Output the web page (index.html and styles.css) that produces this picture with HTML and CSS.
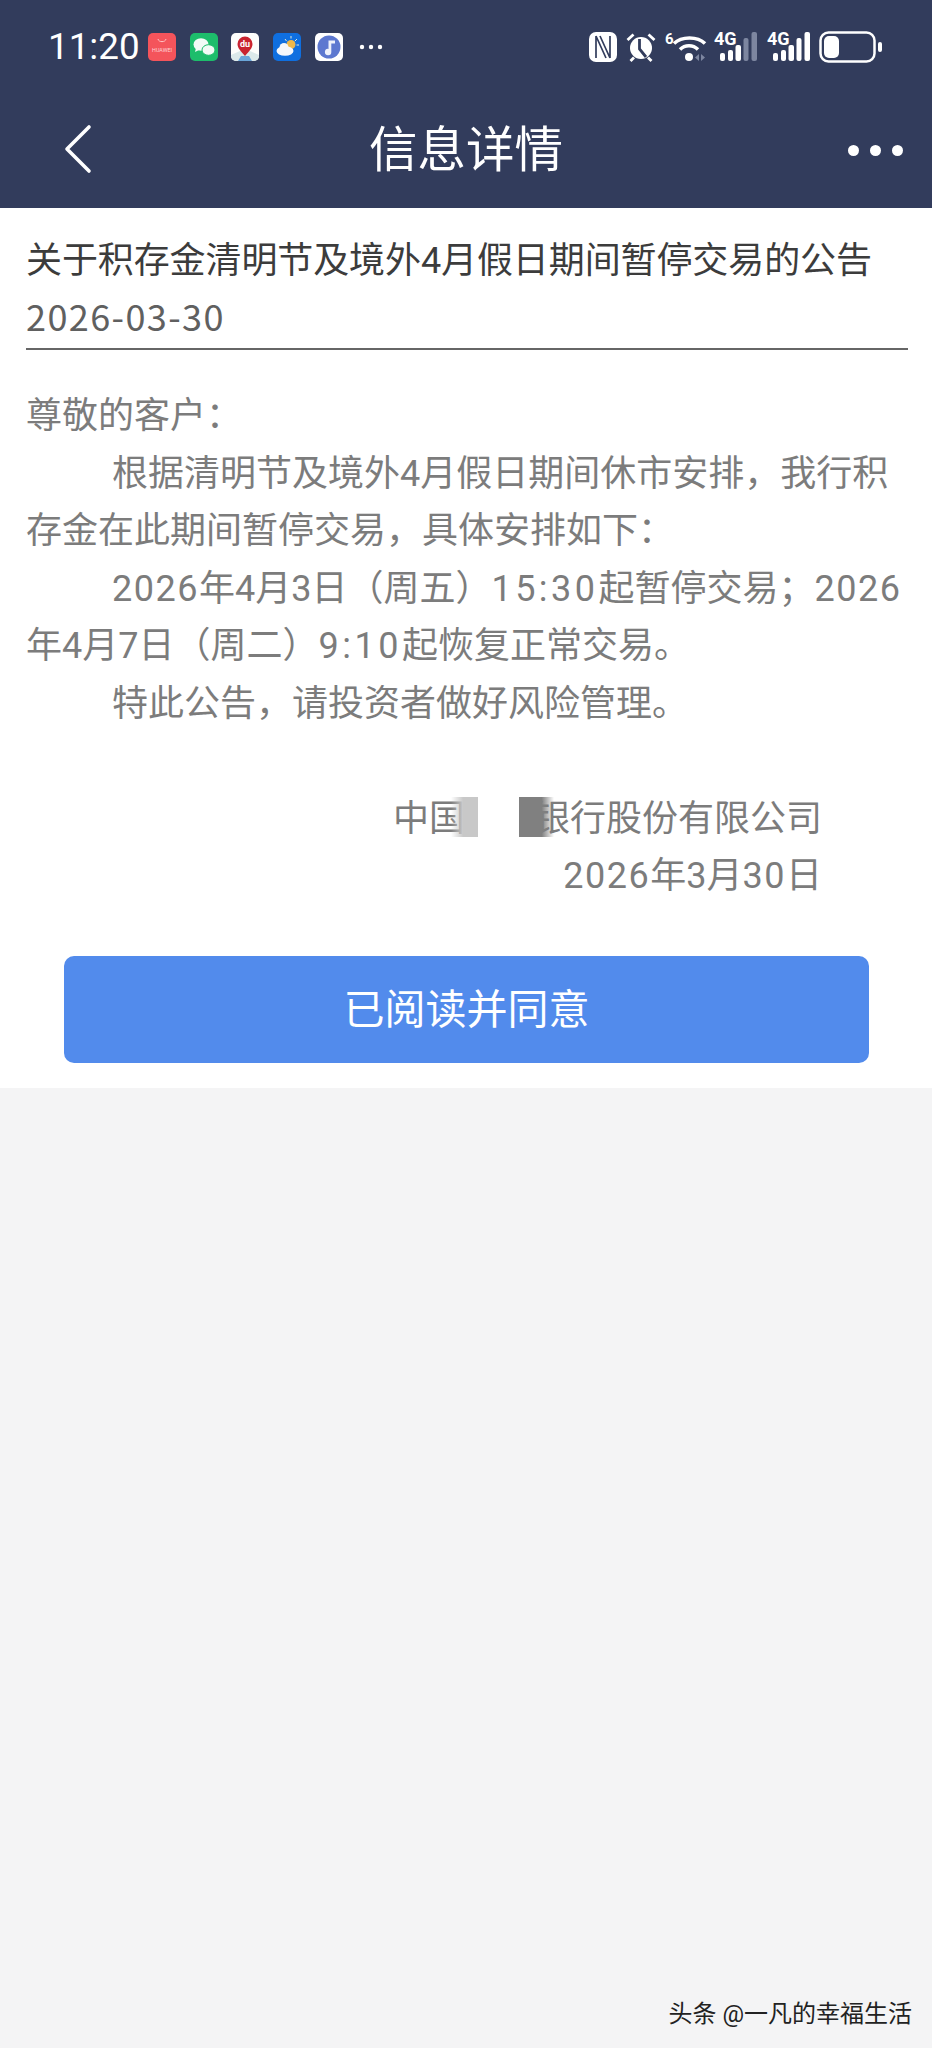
FILE: index.html
```html
<!DOCTYPE html>
<html lang="zh-CN">
<head>
<meta charset="utf-8">
<title>信息详情</title>
<link rel="stylesheet" href="styles.css">
</head>
<body>
<div class="top">
  <div class="status">
    <div class="status-left">
      <span class="time">11:20</span>
      <div class="apps">
        <svg class="app" viewBox="0 0 28 28"><rect width="28" height="28" rx="5" fill="#f4545b"/><path d="M10 6c.5 3.500 7.500 3.500 8 0" fill="none" stroke="#ffc4c6" stroke-width="1"/><text x="14" y="18.500" class="app-brand">HUAWEI</text></svg>
        <svg class="app" viewBox="0 0 28 28"><rect width="28" height="28" rx="5" fill="#1dbd6b"/><ellipse cx="11" cy="11.500" rx="7.500" ry="6.200" fill="#f2fbf6"/><path d="M6 15l-1 4 4-2z" fill="#f2fbf6"/><ellipse cx="18.500" cy="17" rx="6.500" ry="5.300" fill="#f2fbf6" stroke="#1dbd6b"/></svg>
        <svg class="app" viewBox="0 0 28 28"><rect width="28" height="28" rx="5" fill="#fdfdfb"/><path d="M0 22l9-4h10l9 4v1a5 5 0 0 1-5 5H5a5 5 0 0 1-5-5z" fill="#dce9ea"/><path d="M10 23h8l3 5H7z" fill="#6aa5d8"/><path d="M14 23c-4-5-7.500-7.500-7.500-12a7.500 7.500 0 0 1 15 0c0 4.500-3.500 7-7.500 12z" fill="#c9232f"/><text x="14" y="13.500" class="app-du">du</text></svg>
        <svg class="app" viewBox="0 0 28 28"><rect width="28" height="28" rx="5" fill="#0f6fe0"/><path d="M18 3v2.500M24 6l-2 2M26 12h-2.500M12 6l1.500 2" stroke="#dfe9d8" stroke-width="1"/><circle cx="18" cy="11.500" r="4.500" fill="#eeb84a"/><ellipse cx="12" cy="18" rx="8.500" ry="4.800" fill="#f4f7fb"/><circle cx="11" cy="14.500" r="4.500" fill="#f4f7fb"/></svg>
        <svg class="app" viewBox="0 0 28 28"><rect width="28" height="28" rx="5" fill="#fff"/><circle cx="14" cy="14" r="11.500" fill="#5d78d0"/><path d="M13.500 7.500h6.500v3h-3.700v8.500a3.200 3.200 0 1 1-2.800-3.100z" fill="#eef1fb"/></svg>
      </div>
      <svg class="more-small" viewBox="0 0 24 6"><circle cx="3" cy="3" r="2.200"/><circle cx="12" cy="3" r="2.200"/><circle cx="21" cy="3" r="2.200"/></svg>
    </div>
    <div class="status-right">
      <svg class="ic-nfc" viewBox="0 0 28 30"><rect width="28" height="30" rx="7" fill="#fff"/><path d="M7 4v22M21 4v22M7 4l10 22M11 4l10 22" fill="none" stroke="#323c5c" stroke-width="1.700"/></svg>
      <svg class="ic-alarm" viewBox="0 0 32 30"><circle cx="16" cy="16" r="11" fill="#fff"/><path d="M14.500 7v10l6.500 8" fill="none" stroke="#323c5c" stroke-width="2.800"/><path d="M2.500 8l6-5.500M29.500 8l-6-5.500M5.500 29l3.500-3.500M26.500 29L23 25.500" stroke="#fff" stroke-width="2.800" fill="none"/></svg>
      <div class="wifi">
        <span class="wifi-six">6</span>
        <svg class="ic-wifi" viewBox="0 0 45 30"><path d="M9 11.500c7.500-7.500 23.500-7.500 31 0M15 17.500c5-5 13-5 18 0" fill="none" stroke="#fff" stroke-width="3.500"/><circle cx="24" cy="25" r="4" fill="#fff"/><path d="M34 22v7l-4-3.500zM36 22v7l4-3.500z" fill="#7d86a0"/></svg>
      </div>
      <div class="sig">
        <span class="sig-label">4G</span>
        <svg class="bars" viewBox="0 0 37 30"><rect x="0" y="21" width="5" height="8" rx="2" fill="#fff"/><rect x="8" y="18" width="5" height="11" rx="2" fill="#fff"/><rect x="15.500" y="13" width="5.500" height="16" rx="2" fill="#fff"/><rect x="23.500" y="6" width="5" height="23" rx="2" fill="#7d86a0"/><rect x="31.500" y="0" width="5.500" height="29" rx="2" fill="#7d86a0"/></svg>
      </div>
      <div class="sig">
        <span class="sig-label">4G</span>
        <svg class="bars" viewBox="0 0 37 30"><rect x="0" y="21" width="5" height="8" rx="2" fill="#fff"/><rect x="8" y="18" width="5" height="11" rx="2" fill="#fff"/><rect x="15.500" y="13" width="5.500" height="16" rx="2" fill="#fff"/><rect x="23.500" y="6" width="5" height="23" rx="2" fill="#fff"/><rect x="31.500" y="0" width="5.500" height="29" rx="2" fill="#fff"/></svg>
      </div>
      <svg class="ic-batt" viewBox="0 0 63 32"><rect x="1.500" y="1.500" width="54" height="29" rx="8" fill="none" stroke="#fff" stroke-width="2.500"/><rect x="5" y="5" width="15" height="22" rx="5" fill="#fff"/><rect x="59" y="11" width="4" height="10" rx="2" fill="#fff"/></svg>
    </div>
  </div>
  <div class="nav">
    <svg class="back" viewBox="0 0 30 50"><path d="M26 3L4 25l22 22" fill="none" stroke="#fff" stroke-width="3.600" stroke-linecap="round" stroke-linejoin="round"/></svg>
    <h1 class="nav-title">信息详情</h1>
    <svg class="more" viewBox="0 0 55 11"><circle cx="5.500" cy="5.500" r="5.500"/><circle cx="27.500" cy="5.500" r="5.500"/><circle cx="49.500" cy="5.500" r="5.500"/></svg>
  </div>
</div>
<main class="panel">
  <div class="head">
    <div class="title">关于积存金清明节及境外4月假日期间暂停交易的公告</div>
    <div class="date">2026-03-30</div>
  </div>
  <div class="content">
    <p class="line">尊敬的客户：</p>
    <p class="line indent">根据清明节及境外4月假日期间休市安排，我行积存金在此期间暂停交易，具体安排如下：</p>
    <p class="line indent"><span class="num">2026</span>年4月3日（周五）<span class="clock">15:30</span>起暂停交易；<span class="num">2026</span>年4月7日（周二）<span class="clock">9:10</span>起恢复正常交易。</p>
    <p class="line indent">特此公告，请投资者做好风险管理。</p>
  </div>
  <div class="sign">
    <p class="line">中国<span class="mosaic"><span class="m-light"></span><span class="m-dark"></span></span>银行股份有限公司</p>
    <p class="line"><span class="num">2026</span>年3月<span class="num">30</span>日</p>
  </div>
  <div class="actions"><button class="agree" type="button">已阅读并同意</button></div>
</main>
<div class="mark">头条 @一凡的幸福生活</div>
</body>
</html>
```

FILE: styles.css
```css
* { box-sizing: border-box; }
html, body { margin: 0; height: 100%; }
body {
  width: 932px;
  height: 2048px;
  background: #f4f4f5;
  font-family: "Roboto", "Noto Sans CJK SC", sans-serif;
  display: flex;
  flex-direction: column;
  overflow: hidden;
  position: relative;
}
.top { background: #323c5c; height: 208px; color: #fff; flex: none; }
.status {
  height: 92px;
  padding: 29px 50px 0 48px;
  display: flex;
  justify-content: space-between;
  align-items: flex-start;
}
.status-left, .status-right { display: flex; align-items: center; height: 36px; }
.time { font-size: 36.800px; line-height: 36px; width: 100px; color: #fff; }
.apps { display: flex; gap: 13.700px; }
.app { width: 28px; height: 28px; display: block; }
.app-brand { font: 400 5.400px "Roboto", sans-serif; fill: #ffd6d7; text-anchor: middle; }
.app-du { font: 700 9px "Roboto", sans-serif; fill: #fff; text-anchor: middle; }
.more-small { width: 24px; height: 6px; fill: #fff; margin-left: 16px; }
.ic-nfc { width: 28px; height: 30px; margin-right: 8px; }
.ic-alarm { width: 32px; height: 30px; margin-right: 8px; }
.wifi { position: relative; width: 45px; height: 30px; margin-right: 4px; }
.ic-wifi { width: 45px; height: 30px; display: block; }
.wifi-six { position: absolute; left: 0; top: -1px; font-size: 15px; font-weight: 700; line-height: 16px; color: #fff; }
.sig { position: relative; width: 43px; height: 30px; display: flex; align-items: flex-end; justify-content: flex-end; }
.sig + .sig { margin-left: 10px; margin-right: 9px; }
.sig-label { position: absolute; left: 0; top: -2px; font-size: 18px; font-weight: 700; line-height: 18px; color: #fff; }
.bars { width: 37px; height: 30px; display: block; }
.ic-batt { width: 63px; height: 32px; }
.nav { height: 116px; display: flex; align-items: center; justify-content: space-between; padding: 0 29px 0 63px; position: relative; }
.back { width: 30px; height: 50px; margin-top: -3px; }
.nav-title {
  position: absolute;
  left: 0;
  right: 0;
  top: 0;
  margin: 0;
  text-align: center;
  font-size: 48.500px;
  line-height: 118px;
  font-weight: 400;
  color: #fff;
}
.more { width: 55px; height: 11px; fill: #fff; }
.panel { background: #fff; height: 880px; flex: none; padding: 27px 24px 0 26px; }
.head { border-bottom: 2px solid #666; height: 115px; }
.title { font-size: 36px; line-height: 52px; color: #3c3c3c; white-space: nowrap; letter-spacing: -.1px; }
.date { font-size: 36px; line-height: 52px; margin-top: 2px; color: #606060; font-family: "Noto Sans CJK SC", sans-serif; letter-spacing: 1.400px; }
.content { padding-top: 38px; }
.line { margin: 0; font-size: 36px; line-height: 57.600px; color: #7c7c7c; }
.indent { text-indent: 86px; }
.num { letter-spacing: 1.500px; }
.clock { letter-spacing: 3.500px; }
.sign { margin-top: 57px; padding-right: 86px; text-align: right; }
.mosaic { display: inline-block; position: relative; width: 69px; height: 40px; vertical-align: -6px; }
.m-light { position: absolute; left: -14px; top: 0; width: 27px; height: 100%; background: linear-gradient(90deg, rgba(200,200,200,0), #c8c8c8 45%); }
.m-dark { position: absolute; left: 54px; top: 0; width: 35px; height: 100%; background: linear-gradient(90deg, #808080 65%, rgba(128,128,128,0)); }
.actions { padding: 50px 0 0 38px; }
.agree {
  display: block;
  width: 805px;
  height: 107px;
  padding: 0 0 6px;
  border: 0;
  border-radius: 10px;
  background: #528bec;
  color: #fff;
  font-family: inherit;
  font-size: 41px;
}
.mark {
  position: absolute;
  right: 20px;
  bottom: 18px;
  font-size: 24px;
  line-height: 32px;
  color: #222;
}
```
